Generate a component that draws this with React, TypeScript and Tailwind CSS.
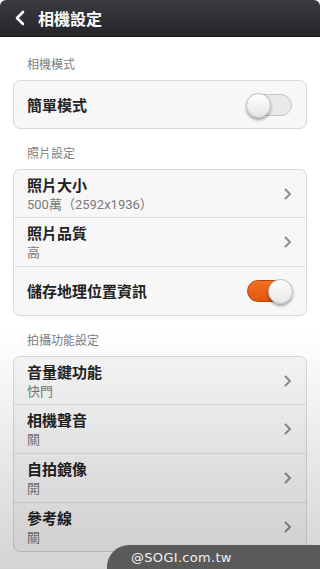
import React from 'react';

type Row = { title: string; sub?: string; toggle?: boolean; on?: boolean };

const SECTIONS: { label: string; rows: Row[] }[] = [
  { label: '相機模式', rows: [{ title: '簡單模式', toggle: true, on: false }] },
  {
    label: '照片設定',
    rows: [
      { title: '照片大小', sub: '500萬（2592x1936）' },
      { title: '照片品質', sub: '高' },
      { title: '儲存地理位置資訊', toggle: true, on: true },
    ],
  },
  {
    label: '拍攝功能設定',
    rows: [
      { title: '音量鍵功能', sub: '快門' },
      { title: '相機聲音', sub: '關' },
      { title: '自拍鏡像', sub: '開' },
      { title: '參考線', sub: '關' },
    ],
  },
];

const Chevron = () => (
  <svg width="8" height="12" viewBox="0 0 8 12" className="shrink-0">
    <path d="M1.5 1.5 L6 6 L1.5 10.5" fill="none" stroke="#8e8e8e" strokeWidth="2" strokeLinecap="round" strokeLinejoin="round" />
  </svg>
);

const Toggle = ({ on }: { on?: boolean }) => (
  <div
    className={`relative w-[45px] h-[22px] rounded-full border ${
      on ? 'bg-gradient-to-b from-[#f2701f] to-[#e0560e] border-[#b5470c]' : 'bg-[#e9e9e9] border-[#c4c4c4]'
    }`}
  >
    <div
      className={`absolute top-[-2px] w-[25px] h-[25px] rounded-full bg-gradient-to-b from-white to-[#e6e6e6] border border-[#bdbdbd] shadow-[0_2px_3px_rgba(0,0,0,0.35)] ${
        on ? 'right-[-2px]' : 'left-[-2px]'
      }`}
    />
  </div>
);

export default function App() {
  return (
    <div
      className="relative w-[320px] h-[569px] overflow-hidden bg-white"
      style={{ fontFamily: '"Noto Sans CJK TC", "Noto Sans", sans-serif' }}
    >
      {/* Title bar */}
      <div className="h-[37px] flex items-center gap-3 pl-[14px] rounded-t-[6px] bg-gradient-to-b from-[#3a3b40] to-[#25262a] border-b border-[#151518]">
        <svg width="12" height="16" viewBox="0 0 12 16">
          <path d="M9 2 L3 8 L9 14" fill="none" stroke="#ffffff" strokeWidth="2.6" strokeLinecap="round" strokeLinejoin="round" />
        </svg>
        <span className="text-[16px] font-bold text-white leading-none">相機設定</span>
      </div>

      <div className="px-[13px]">
        {SECTIONS.map((sec, si) => (
          <div key={sec.label}>
            <div
              className={`${si === 0 ? 'h-[43px]' : 'h-[40px]'} pl-[14px] flex items-end pb-[9px] text-[12px] text-[#808080] leading-[14px]`}
            >
              {sec.label}
            </div>
            <div className="rounded-[7px] border border-[#d9d9d9] bg-[#f7f7f7] overflow-hidden">
              {sec.rows.map((r, i) => (
                <div
                  key={r.title}
                  className={`flex items-center justify-between pl-[13px] pr-[14px] ${
                    i > 0 ? 'h-[49px] border-t border-[#e0e0e0]' : 'h-[47px]'
                  }`}
                >
                  <div className="flex flex-col">
                    <span className="text-[15px] font-semibold text-[#222] leading-[18px]">{r.title}</span>
                    {r.sub && (
                      <span
                        className="mt-[3px] text-[13px] text-[#7a7a7a] leading-[15px]"
                        style={{ fontFamily: 'Roboto, "Noto Sans CJK TC", sans-serif' }}
                      >
                        {r.sub}
                      </span>
                    )}
                  </div>
                  {r.toggle ? <Toggle on={r.on} /> : <Chevron />}
                </div>
              ))}
            </div>
          </div>
        ))}
      </div>

      {/* lower shading */}
      <div className="pointer-events-none absolute left-0 right-0 top-[330px] bottom-0 bg-gradient-to-b from-transparent to-black/[0.17]" />

      {/* watermark */}
      <div className="absolute right-0 bottom-0 w-[213px] h-[24px] rounded-tl-[22px] bg-[#5a5a5a] flex items-center pl-[24px]">
        <span className="text-[13px] text-[#f0f0f0] leading-none tracking-[0.3px]" style={{ fontFamily: '"DejaVu Sans", sans-serif' }}>
          @SOGI.com.tw
        </span>
      </div>
    </div>
  );
}
